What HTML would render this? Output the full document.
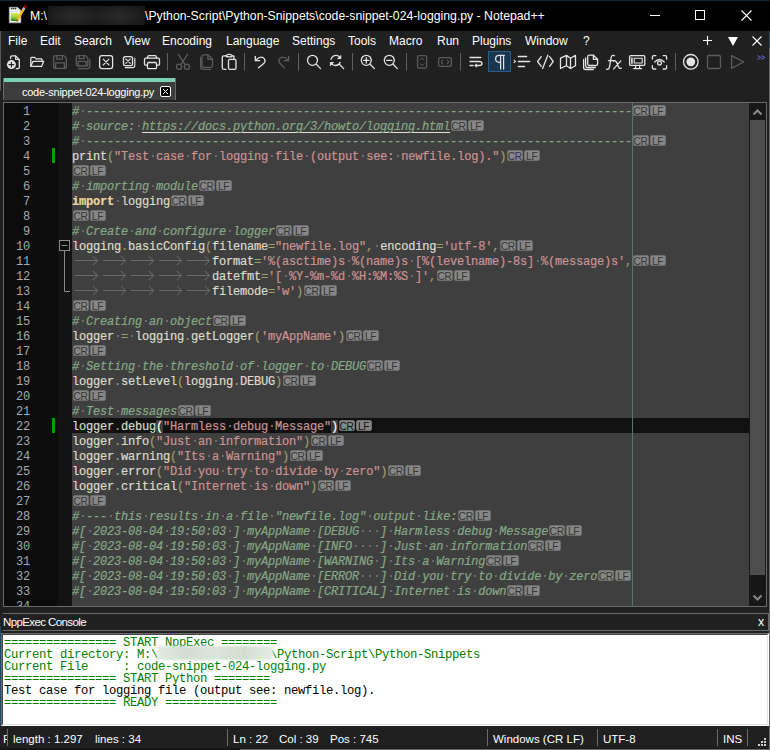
<!DOCTYPE html>
<html><head><meta charset="utf-8">
<style>
*{margin:0;padding:0;box-sizing:border-box}
html,body{width:770px;height:750px;overflow:hidden;background:#202020}
body{position:relative;font-family:"Liberation Sans",sans-serif;color:#fff}
.a{position:absolute}
#title{left:0;top:0;width:770px;height:31px;background:#000}
#title .t{left:30px;top:9px;font-size:12.25px;color:#fff;white-space:nowrap;letter-spacing:0px}
#blur{left:48px;top:6px;width:97px;height:19px;background:radial-gradient(ellipse 30px 10px at 25px 10px,#2a2a2a,transparent),radial-gradient(ellipse 28px 10px at 72px 10px,#2a2a2a,transparent),linear-gradient(90deg,#161616,#1e1e1e 20%,#1a1a1a 48%,#1e1e1e 75%,#161616)}
#menu{left:0;top:31px;width:770px;height:21px;background:#202020}
.mi{position:absolute;top:3px;font-size:12px;color:#fff;white-space:nowrap}
#tb{left:0;top:52px;width:770px;height:24px;background:#202020}
#tabbar{left:0;top:76px;width:770px;height:26px;background:#202020}
#tab{left:3px;top:2px;width:173px;height:22px;background:#3c3c3c;border-left:1px solid #6a6a6a;border-right:1px solid #6a6a6a}
#tabgreen{left:0;top:0;width:171px;height:4px;background:#7ad1b0}
#editor{left:3px;top:102px;width:764px;height:505px;border:1px solid #6a6a6a;background:#3f3f3f;overflow:hidden}
#lnm{left:0;top:0;width:54px;height:503px;background:#0c0c0c}
#fold{left:54px;top:0;width:14px;height:503px;background-color:#0e0e0e;background-image:linear-gradient(45deg,#181818 25%,transparent 25%,transparent 75%,#181818 75%),linear-gradient(45deg,#181818 25%,transparent 25%,transparent 75%,#181818 75%);background-size:2px 2px;background-position:0 0,1px 1px}
.num{position:absolute;left:0;width:26px;height:15px;text-align:right;font-family:"Liberation Mono",monospace;font-size:12px;letter-spacing:-0.2px;line-height:19px;color:#a0aab0}
#code{left:68px;top:0;width:677px;height:503px}
.ln{position:absolute;left:0;width:677px;height:15px;white-space:pre;font-family:"Liberation Mono",monospace;font-size:12px;letter-spacing:-0.2px;line-height:19px;color:#dcdccc;-webkit-text-stroke:0.2px}
.ln.cur{background:#111111}
.cm{color:#86a886;font-style:italic}
.u{text-decoration:underline;text-decoration-color:#e0e0d0;text-underline-offset:2px;text-decoration-thickness:1px}
.s{color:#cc9393}
.op{color:#9f9d6d}
.kw{color:#efd49f;font-weight:bold}
.id{color:#dcdccc}
.brace{color:#ffffff;background:#3f3f3f}
i.d{display:inline-block;width:7px;height:15px;position:relative;vertical-align:top;font-style:normal}
i.d::after{content:"";position:absolute;left:3px;top:7px;width:2px;height:2px;background:#6c6c6c}
i.t{display:inline-block;width:28px;height:15px;position:relative;vertical-align:top}
i.t::before{content:"";position:absolute;left:3px;top:7px;width:22px;height:1px;background:#6a6a6a}
i.t::after{content:"";position:absolute;left:18px;top:4.2px;width:5.6px;height:5.6px;border-top:1px solid #666;border-right:1px solid #666;transform:rotate(45deg)}
b.cr,b.lf{-webkit-text-stroke:0;display:inline-block;vertical-align:top;margin-top:2px;height:11px;width:16px;background:#878787;border:1px solid #6e6e6e;color:#353535;font-family:"Liberation Sans",sans-serif;font-weight:normal;font-size:10.2px;line-height:11.5px;text-align:center;border-radius:2px;letter-spacing:-0.3px;text-indent:-1px;white-space:nowrap;font-style:normal;text-decoration:none}
b.cr{margin-left:1px}
.cur b.cr,.cur b.lf{color:#111}
b.lf{margin-left:1px}
#edge{left:628px;top:0;width:1px;height:503px;background:#5c7272}
#vsb{left:745px;top:0;width:17px;height:503px;background:#171717}
#thumb{left:1px;top:17px;width:15px;height:455px;background:#4d4d4d}
#panelgap{left:0;top:607px;width:770px;height:6px;background:#202020}
#ptitle{left:3px;top:613px;width:766px;height:18px;background:#202020;border-top:1px solid #6a6a6a;border-bottom:1px solid #6a6a6a;border-right:1px solid #6a6a6a}
#console{left:0px;top:631px;width:770px;height:95px;background:#202020}
#cwhite{left:3px;top:4px;width:764px;height:89px;overflow:hidden}
.cl{position:absolute;left:1px;white-space:pre;font-family:"Liberation Mono",monospace;font-size:12.25px;letter-spacing:-0.35px;line-height:12px;color:#008000}
#status{left:0;top:726px;width:770px;height:24px;background:#202020}
.st{position:absolute;top:7px;font-size:11.5px;color:#fff;white-space:nowrap}
.sep{position:absolute;top:3px;width:1px;height:17px;background:#6a6a6a}
svg{position:absolute;overflow:visible}
</style></head><body>
<div id="title" class="a">
  <div class="a" style="left:0;top:0;width:770px;height:1px;background:#12283a"></div>
  <svg style="left:4px;top:2px" width="26" height="26">
    <defs><linearGradient id="gg" x1="0" y1="0" x2="0" y2="1"><stop offset="0" stop-color="#e0ea60"/><stop offset="0.5" stop-color="#9ad43a"/><stop offset="1" stop-color="#1e8a1a"/></linearGradient></defs>
    <path d="M5.3 5.3 H13.5 L16.8 8.6 V20.8 H5.3 Z" fill="#f6f6f6" stroke="#b0b0b0" stroke-width="0.8"/>
    <path d="M13.5 5.3 V8.6 H16.8 Z" fill="#d8d8d8"/>
    <circle cx="7.6" cy="6.6" r="0.9" fill="#333"/><circle cx="9.6" cy="6.6" r="0.9" fill="#333"/><circle cx="11.6" cy="6.6" r="0.9" fill="#333"/>
    <path d="M6.5 9.6 H14" stroke="#a8c8e8" stroke-width="0.6"/>
    <rect x="6.8" y="11" width="7.8" height="8" fill="url(#gg)"/>
    <path d="M20.2 6.2 L13.4 17.8" stroke="#f2b81c" stroke-width="2.6"/>
    <path d="M13.4 17.8 L12.6 19.3" stroke="#6a4a10" stroke-width="1.6"/>
    <path d="M20.4 5.8 L19.4 7.4" stroke="#a8b8d0" stroke-width="2.6"/>
    <path d="M21.6 3.8 L20.6 5.4" stroke="#c80000" stroke-width="2.6"/>
  </svg>
  <div class="a t">M:\</div>
  <div id="blur" class="a"></div>
  <div class="a t" style="left:145px">\Python-Script\Python-Snippets\code-snippet-024-logging.py - Notepad++</div>
  <svg style="left:650px;top:15px" width="11" height="1"><rect x="0" y="0" width="10" height="1" fill="#fff"/></svg>
  <svg style="left:695px;top:10px" width="11" height="11"><rect x="0.5" y="0.5" width="9" height="9" fill="none" stroke="#fff"/></svg>
  <svg style="left:741px;top:10px" width="11" height="11"><path d="M0.5 0.5L10.5 10.5M10.5 0.5L0.5 10.5" stroke="#fff" stroke-width="1.1"/></svg>
</div>
<div id="menu" class="a">
  <div class="mi" style="left:8px">File</div>
  <div class="mi" style="left:40px">Edit</div>
  <div class="mi" style="left:74px">Search</div>
  <div class="mi" style="left:124px">View</div>
  <div class="mi" style="left:162px">Encoding</div>
  <div class="mi" style="left:226px">Language</div>
  <div class="mi" style="left:292px">Settings</div>
  <div class="mi" style="left:348px">Tools</div>
  <div class="mi" style="left:389px">Macro</div>
  <div class="mi" style="left:437px">Run</div>
  <div class="mi" style="left:472px">Plugins</div>
  <div class="mi" style="left:525px">Window</div>
  <div class="mi" style="left:583px">?</div>
  <svg style="left:703px;top:5px" width="9" height="9"><path d="M4.5 0v9M0 4.5h9" stroke="#fff" stroke-width="1.2"/></svg>
  <svg style="left:728px;top:6px" width="10" height="9"><path d="M0 0h10L5 9z" fill="#fff"/></svg>
  <svg style="left:752px;top:5px" width="10" height="10"><path d="M0.5 0.5L9.5 9.5M9.5 0.5L0.5 9.5" stroke="#fff" stroke-width="1.1"/></svg>
</div>
<div id="tb" class="a"></div>
<svg style="left:0;top:0" width="770" height="76" viewBox="0 0 770 76">
<g fill="none" stroke="#e4e4e4" stroke-width="1.3" stroke-linecap="round" stroke-linejoin="round">
  <!-- new -->
  <path d="M10.6 59.3 V57.3 Q10.6 55.8 12.1 55.8 H15.4 L19.3 59.7 V67.2 Q19.3 68.6 17.9 68.6 H15.8"/>
  <path d="M15.6 56.2 V59.5 H19" stroke-width="1.1"/>
  <circle cx="11.4" cy="64.6" r="5.9" fill="#202020" stroke="none"/>
  <circle cx="11.4" cy="64.6" r="4.5" fill="#e4e4e4" stroke="none"/>
  <path d="M11.4 62.2 V67 M9 64.6 H13.8" stroke="#202020" stroke-width="1.1"/>
  <!-- open -->
  <path d="M30.8 65.8 V58.3 Q30.8 57.4 31.7 57.4 H34.7 L36.2 58.9 H41.2 Q42 58.9 42 59.7 V61"/>
  <path d="M30.8 66.3 L33 61.3 H43.7 L41.7 66.3 Z"/>
  <!-- close -->
  <rect x="99.6" y="55.6" width="13" height="13" rx="2.3"/>
  <path d="M103.2 59.2 L109 65 M109 59.2 L103.2 65" stroke-width="1.1"/>
  <!-- close all -->
  <rect x="123.5" y="56.6" width="9" height="9" rx="1.6"/>
  <path d="M125.8 58.9 L130.2 63.3 M130.2 58.9 L125.8 63.3" stroke-width="1.1"/>
  <path d="M134.8 58 V65.5 Q134.8 67.6 132.7 67.6 H125.2" stroke-width="1.1"/>
  <!-- print -->
  <path d="M147.8 58 V56.6 Q147.8 55.6 148.8 55.6 H155.2 Q156.2 55.6 156.2 56.6 V58"/>
  <path d="M147.3 65.2 H145.8 Q144.5 65.2 144.5 63.9 V59.4 Q144.5 58.1 145.8 58.1 H158.2 Q159.5 58.1 159.5 59.4 V63.9 Q159.5 65.2 158.2 65.2 H156.7"/>
  <rect x="147.5" y="62.5" width="9" height="6.2" rx="1"/>
</g>
<g fill="none" stroke="#5c5c5c" stroke-width="1.3" stroke-linecap="round" stroke-linejoin="round">
  <!-- save -->
  <path d="M55.5 55.6 H63.8 L66.4 58.2 V66.4 Q66.4 68.4 64.4 68.4 H55.6 Q53.6 68.4 53.6 66.4 V57.6 Q53.6 55.6 55.5 55.6 Z"/>
  <path d="M56.8 55.8 V59.2 H62.4 V55.8"/>
  <path d="M55.6 68.2 V62.8 H64.4 V68.2"/>
  <!-- save all -->
  <path d="M78 55.6 H85.5 L87.8 57.9 V64.3 Q87.8 66 86.1 66 H78 Q76.4 66 76.4 64.3 V57.3 Q76.4 55.6 78 55.6 Z"/>
  <path d="M79.2 55.8 V58.6 H84 V55.8"/>
  <path d="M78.2 65.8 V61.3 H86 V65.8"/>
  <path d="M89.8 59.2 V66.5 Q89.8 68.6 87.7 68.6 H78.3"/>
  <!-- cut -->
  <path d="M178.3 54.3 L184.6 63.8 M187.6 54.3 L181.3 63.8"/>
  <circle cx="179" cy="66.8" r="2.6"/>
  <circle cx="186.9" cy="66.8" r="2.6"/>
  <!-- copy -->
  <path d="M203.7 54.8 H207.9 L212.5 59.3 V65.6 Q212.5 67.3 210.8 67.3 H203.7 Q202 67.3 202 65.6 V56.5 Q202 54.8 203.7 54.8 Z"/>
  <path d="M207.9 54.9 V59.3 H212.4"/>
  <path d="M200.6 57.5 V66.8 Q200.6 69.3 203.1 69.3 H210.5"/>
  <!-- redo -->
  <path d="M288.6 56.3 V60.7 H284.2"/>
  <path d="M288.3 60.5 Q284.5 55.8 280.6 57.8 Q277.6 60.3 279.9 63.2 L284.4 67.8"/>
  <!-- sync v -->
  <rect x="417.6" y="55.6" width="9" height="12.6" rx="1.5"/>
  <path d="M420.3 59.8 L422.1 58 L423.9 59.8 M420.3 63.9 L422.1 65.7 L423.9 63.9" stroke-width="1"/>
  <!-- sync h -->
  <rect x="438.6" y="57.6" width="12.8" height="8.8" rx="1.5"/>
  <path d="M442.6 60.2 L441.2 62 L442.6 63.8 M447.4 60.2 L448.8 62 L447.4 63.8" stroke-width="1.1"/>
  <!-- stop -->
  <rect x="707.5" y="55.5" width="13" height="13" rx="1.5"/>
  <!-- play -->
  <path d="M731.6 55.6 V68.4 L743.6 62 Z"/>
</g>
<g fill="none" stroke="#e4e4e4" stroke-width="1.3" stroke-linecap="round" stroke-linejoin="round">
  <!-- paste -->
  <path d="M226 69.3 H223.8 Q222.3 69.3 222.3 67.8 V57.3 Q222.3 55.8 223.8 55.8 H226 M232.3 55.8 H233.2 Q234 55.8 234 56.6 V58.5"/>
  <path d="M226.2 56.2 Q226.2 54.3 229.2 54.3 Q232.2 54.3 232.2 56.2 Q232.2 56.8 229.2 56.8 Q226.2 56.8 226.2 56.2 Z"/>
  <rect x="228.5" y="59.3" width="7.5" height="10" rx="1.3"/>
  <!-- undo -->
  <path d="M255.3 56.3 V60.7 H259.7"/>
  <path d="M255.6 60.5 Q259.4 55.8 263.3 57.8 Q266.3 60.3 264 63.2 L258.5 67.8"/>
  <!-- find -->
  <circle cx="312.5" cy="60.3" r="5"/>
  <path d="M316.3 64.2 L320.6 68.6"/>
  <!-- replace -->
  <path d="M331 59.3 Q332.5 55.3 336.3 55.4 Q339 55.6 340.2 57.6"/>
  <path d="M340.2 62.3 Q338.8 65.7 335.3 65.5 Q332.4 65.3 331.2 63.5"/>
  <path d="M340.8 55.9 V58.6 H338.1 Z M330.4 65.2 V62.5 H333.1 Z" fill="#e4e4e4" stroke-width="1"/>
  <path d="M339.4 64.3 L343.7 68.6"/>
  <!-- zoom in -->
  <circle cx="366.3" cy="60.3" r="5"/>
  <path d="M370.1 64.2 L374.4 68.6 M366.3 57.6 V63 M363.6 60.3 H369"/>
  <!-- zoom out -->
  <circle cx="389.3" cy="60.3" r="5"/>
  <path d="M393.1 64.2 L397.4 68.6 M386.6 60.3 H392"/>
  <!-- wrap -->
  <path d="M470 57.5 H480.8 M470 61.5 H479 Q482 61.5 482 63.5 Q482 65.5 479 65.5 H475.5 M470 65.5 H473"/>
  <path d="M476.6 64.1 L475.1 65.5 L476.6 66.9" stroke-width="1.1"/>
  <!-- indent -->
  <path d="M514.1 60.2 L515.5 61.4 L514.1 62.6" stroke-width="1.1"/>
  <path d="M518.3 56.5 H526.6 M518.3 61.5 H529.8 M518.3 66.5 H524.6"/>
  <!-- lang -->
  <path d="M541.2 56.6 L537.6 61.5 L541.2 66.4 M549.6 56.6 L553.2 61.5 L549.6 66.4 M547.8 55.2 L542.6 68.4"/>
  <!-- map -->
  <path d="M560.5 58.2 L566.5 55.4 L570.5 58.2 L575.5 55.4 V65.7 L570.5 68.5 L566.5 65.7 L560.5 68.5 Z M566.5 55.4 V65.7 M570.5 58.2 V68.5"/>
  <!-- doc list -->
  <path d="M589.2 55.2 H593.4 L597.6 59.3 V64 Q597.6 65.5 596.1 65.5 H589.2 Q587.7 65.5 587.7 64 V56.7 Q587.7 55.2 589.2 55.2 Z"/>
  <path d="M593.4 55.3 V59.3 H597.5"/>
  <path d="M585.6 58 V65.8 Q585.6 67.5 587.3 67.5 H595.3 M583.6 59.5 V67.5 Q583.6 69.5 585.6 69.5 H593.3"/>
  <!-- monitor -->
  <rect x="629.6" y="55.6" width="15.2" height="9.8" rx="1.2"/>
  <rect x="634.2" y="58.2" width="8" height="4.8" stroke-width="1.1"/>
  <path d="M631.9 58 V63.2" stroke-width="1.6"/>
  <path d="M635.6 65.5 V68.4 M639.6 65.5 V68.4 M633.6 68.6 H641.6"/>
  <!-- eye -->
  <path d="M652.4 59 V56.9 Q652.4 55.6 653.7 55.6 H655.8 M663.2 55.6 H665.3 Q666.6 55.6 666.6 56.9 V59 M666.6 65.6 V67.7 Q666.6 69 665.3 69 H663.2 M655.8 69 H653.7 Q652.4 69 652.4 67.7 V65.6"/>
  <path d="M654.8 62 Q659.5 57 664.2 62"/>
  <circle cx="659.5" cy="63" r="1.9"/>
  <!-- record -->
  <circle cx="690.8" cy="61.8" r="7.3"/>
  <circle cx="690.8" cy="61.8" r="4.4" fill="#e4e4e4" stroke="none"/>
</g>
<!-- pilcrow -->
<rect x="488.5" y="51.5" width="22" height="20" fill="#1b3650" stroke="#2a5d8f" stroke-width="1"/>
<path d="M504.8 55.3 H499.2 Q495.6 55.3 495.6 58.8 Q495.6 62.3 499.2 62.3 H500.6 M500.6 55.3 V69.6 M503.6 55.3 V69.6" fill="none" stroke="#e4e4e4" stroke-width="1.2"/>
<!-- fx -->
<path d="M614.3 55.7 Q611.8 54.4 611.1 57.6 L609.5 66.8 Q608.9 70.1 606.6 69.1 M608.4 60.6 H613.3 M613.4 61.1 Q615.6 59.9 616.7 62.6 L618.3 66.6 Q619.3 69.2 621.4 68.1 M620.9 60.9 L613.6 68.9" fill="none" stroke="#e4e4e4" stroke-width="1.3" stroke-linecap="round"/>
<!-- separators -->
<g stroke="#606060" stroke-width="1">
  <path d="M167.5 53 V70.5 M244.5 53 V70.5 M298.5 53 V70.5 M352.5 53 V70.5 M406.5 53 V70.5 M460.5 53 V70.5 M675.5 53 V70.5"/>
</g>
<!-- >> -->
<path d="M757.5 55.5 L760.5 57.5 L757.5 59.5 M761.5 55.5 L764.5 57.5 L761.5 59.5" fill="none" stroke="#5a5ab8" stroke-width="1.2"/>
</svg>

<div id="tabbar" class="a">
  <div id="tab" class="a">
    <div id="tabgreen" class="a"></div>
    <div class="a" style="left:18px;top:8px;font-size:11px;letter-spacing:-0.25px;color:#fff;white-space:nowrap">code-snippet-024-logging.py</div>
    <svg style="left:156px;top:8px" width="11" height="11"><rect x="0.5" y="0.5" width="10" height="10" rx="1.5" fill="#000" stroke="#fff"/><path d="M3 3L8 8M8 3L3 8" stroke="#fff"/></svg>
  </div>
</div>
<div id="editor" class="a">
  <div id="lnm" class="a">
<div class="num" style="top:0px">1</div>
<div class="num" style="top:15px">2</div>
<div class="num" style="top:30px">3</div>
<div class="num" style="top:45px">4</div>
<div class="num" style="top:60px">5</div>
<div class="num" style="top:75px">6</div>
<div class="num" style="top:90px">7</div>
<div class="num" style="top:105px">8</div>
<div class="num" style="top:120px">9</div>
<div class="num" style="top:135px">10</div>
<div class="num" style="top:150px">11</div>
<div class="num" style="top:165px">12</div>
<div class="num" style="top:180px">13</div>
<div class="num" style="top:195px">14</div>
<div class="num" style="top:210px">15</div>
<div class="num" style="top:225px">16</div>
<div class="num" style="top:240px">17</div>
<div class="num" style="top:255px">18</div>
<div class="num" style="top:270px">19</div>
<div class="num" style="top:285px">20</div>
<div class="num" style="top:300px">21</div>
<div class="num" style="top:315px">22</div>
<div class="num" style="top:330px">23</div>
<div class="num" style="top:345px">24</div>
<div class="num" style="top:360px">25</div>
<div class="num" style="top:375px">26</div>
<div class="num" style="top:390px">27</div>
<div class="num" style="top:405px">28</div>
<div class="num" style="top:420px">29</div>
<div class="num" style="top:435px">30</div>
<div class="num" style="top:450px">31</div>
<div class="num" style="top:465px">32</div>
<div class="num" style="top:480px">33</div>
<div class="num" style="top:495px">34</div>
  </div>
  <div id="fold" class="a">
    <svg style="left:1px;top:137px" width="12" height="52"><rect x="0.5" y="0.5" width="10" height="10" fill="#0c0c0c" stroke="#8a8a8a"/><path d="M2.5 5.5h6M5.5 11v40.5H11" stroke="#8a8a8a" fill="none"/></svg>
    <div class="a" style="left:-6px;top:315px;width:3px;height:15px;background:#00a000"></div>
    <div class="a" style="left:-6px;top:45px;width:3px;height:15px;background:#00a000"></div>
  </div>
  <div id="code" class="a">
<div class="ln" style="top:0px"><span class="cm">#</span><i class="d"> </i><span class="cm">------------------------------------------------------------------------------</span><b class="cr">CR</b><b class="lf">LF</b></div>
<div class="ln" style="top:15px"><span class="cm">#</span><i class="d"> </i><span class="cm">source:</span><i class="d"> </i><span class="cm u">https://docs.python.org/3/howto/logging.html</span><b class="cr">CR</b><b class="lf">LF</b></div>
<div class="ln" style="top:30px"><span class="cm">#</span><i class="d"> </i><span class="cm">------------------------------------------------------------------------------</span><b class="cr">CR</b><b class="lf">LF</b></div>
<div class="ln" style="top:45px"><span class="id">print</span><span class="op">(</span><span class="s">&quot;Test</span><i class="d"> </i><span class="s">case</span><i class="d"> </i><span class="s">for</span><i class="d"> </i><span class="s">logging</span><i class="d"> </i><span class="s">file</span><i class="d"> </i><span class="s">(output</span><i class="d"> </i><span class="s">see:</span><i class="d"> </i><span class="s">newfile.log).&quot;</span><span class="op">)</span><b class="cr">CR</b><b class="lf">LF</b></div>
<div class="ln" style="top:60px"><b class="cr">CR</b><b class="lf">LF</b></div>
<div class="ln" style="top:75px"><span class="cm">#</span><i class="d"> </i><span class="cm">importing</span><i class="d"> </i><span class="cm">module</span><b class="cr">CR</b><b class="lf">LF</b></div>
<div class="ln" style="top:90px"><span class="kw">import</span><i class="d"> </i><span class="id">logging</span><b class="cr">CR</b><b class="lf">LF</b></div>
<div class="ln" style="top:105px"><b class="cr">CR</b><b class="lf">LF</b></div>
<div class="ln" style="top:120px"><span class="cm">#</span><i class="d"> </i><span class="cm">Create</span><i class="d"> </i><span class="cm">and</span><i class="d"> </i><span class="cm">configure</span><i class="d"> </i><span class="cm">logger</span><b class="cr">CR</b><b class="lf">LF</b></div>
<div class="ln" style="top:135px"><span class="id">logging</span><span class="op">.</span><span class="id">basicConfig</span><span class="op">(</span><span class="id">filename</span><span class="op">=</span><span class="s">&quot;newfile.log&quot;</span><span class="op">,</span><i class="d"> </i><span class="id">encoding</span><span class="op">=</span><span class="s">&#x27;utf-8&#x27;</span><span class="op">,</span><b class="cr">CR</b><b class="lf">LF</b></div>
<div class="ln" style="top:150px"><i class="t"></i><i class="t"></i><i class="t"></i><i class="t"></i><i class="t"></i><span class="id">format</span><span class="op">=</span><span class="s">&#x27;%(asctime)s</span><i class="d"> </i><span class="s">%(name)s</span><i class="d"> </i><span class="s">[%(levelname)-8s]</span><i class="d"> </i><span class="s">%(message)s&#x27;</span><span class="op">,</span><b class="cr">CR</b><b class="lf">LF</b></div>
<div class="ln" style="top:165px"><i class="t"></i><i class="t"></i><i class="t"></i><i class="t"></i><i class="t"></i><span class="id">datefmt</span><span class="op">=</span><span class="s">&#x27;[</span><i class="d"> </i><span class="s">%Y-%m-%d</span><i class="d"> </i><span class="s">%H:%M:%S</span><i class="d"> </i><span class="s">]&#x27;</span><span class="op">,</span><b class="cr">CR</b><b class="lf">LF</b></div>
<div class="ln" style="top:180px"><i class="t"></i><i class="t"></i><i class="t"></i><i class="t"></i><i class="t"></i><span class="id">filemode</span><span class="op">=</span><span class="s">&#x27;w&#x27;</span><span class="op">)</span><b class="cr">CR</b><b class="lf">LF</b></div>
<div class="ln" style="top:195px"><b class="cr">CR</b><b class="lf">LF</b></div>
<div class="ln" style="top:210px"><span class="cm">#</span><i class="d"> </i><span class="cm">Creating</span><i class="d"> </i><span class="cm">an</span><i class="d"> </i><span class="cm">object</span><b class="cr">CR</b><b class="lf">LF</b></div>
<div class="ln" style="top:225px"><span class="id">logger</span><i class="d"> </i><span class="op">=</span><i class="d"> </i><span class="id">logging</span><span class="op">.</span><span class="id">getLogger</span><span class="op">(</span><span class="s">&#x27;myAppName&#x27;</span><span class="op">)</span><b class="cr">CR</b><b class="lf">LF</b></div>
<div class="ln" style="top:240px"><b class="cr">CR</b><b class="lf">LF</b></div>
<div class="ln" style="top:255px"><span class="cm">#</span><i class="d"> </i><span class="cm">Setting</span><i class="d"> </i><span class="cm">the</span><i class="d"> </i><span class="cm">threshold</span><i class="d"> </i><span class="cm">of</span><i class="d"> </i><span class="cm">logger</span><i class="d"> </i><span class="cm">to</span><i class="d"> </i><span class="cm">DEBUG</span><b class="cr">CR</b><b class="lf">LF</b></div>
<div class="ln" style="top:270px"><span class="id">logger</span><span class="op">.</span><span class="id">setLevel</span><span class="op">(</span><span class="id">logging</span><span class="op">.</span><span class="id">DEBUG</span><span class="op">)</span><b class="cr">CR</b><b class="lf">LF</b></div>
<div class="ln" style="top:285px"><b class="cr">CR</b><b class="lf">LF</b></div>
<div class="ln" style="top:300px"><span class="cm">#</span><i class="d"> </i><span class="cm">Test</span><i class="d"> </i><span class="cm">messages</span><b class="cr">CR</b><b class="lf">LF</b></div>
<div class="ln cur" style="top:315px"><span class="id">logger</span><span class="op">.</span><span class="id">debug</span><span class="brace">(</span><span class="s">&quot;Harmless</span><i class="d"> </i><span class="s">debug</span><i class="d"> </i><span class="s">Message&quot;</span><span class="brace">)</span><b class="cr">CR</b><b class="lf">LF</b></div>
<div class="ln" style="top:330px"><span class="id">logger</span><span class="op">.</span><span class="id">info</span><span class="op">(</span><span class="s">&quot;Just</span><i class="d"> </i><span class="s">an</span><i class="d"> </i><span class="s">information&quot;</span><span class="op">)</span><b class="cr">CR</b><b class="lf">LF</b></div>
<div class="ln" style="top:345px"><span class="id">logger</span><span class="op">.</span><span class="id">warning</span><span class="op">(</span><span class="s">&quot;Its</span><i class="d"> </i><span class="s">a</span><i class="d"> </i><span class="s">Warning&quot;</span><span class="op">)</span><b class="cr">CR</b><b class="lf">LF</b></div>
<div class="ln" style="top:360px"><span class="id">logger</span><span class="op">.</span><span class="id">error</span><span class="op">(</span><span class="s">&quot;Did</span><i class="d"> </i><span class="s">you</span><i class="d"> </i><span class="s">try</span><i class="d"> </i><span class="s">to</span><i class="d"> </i><span class="s">divide</span><i class="d"> </i><span class="s">by</span><i class="d"> </i><span class="s">zero&quot;</span><span class="op">)</span><b class="cr">CR</b><b class="lf">LF</b></div>
<div class="ln" style="top:375px"><span class="id">logger</span><span class="op">.</span><span class="id">critical</span><span class="op">(</span><span class="s">&quot;Internet</span><i class="d"> </i><span class="s">is</span><i class="d"> </i><span class="s">down&quot;</span><span class="op">)</span><b class="cr">CR</b><b class="lf">LF</b></div>
<div class="ln" style="top:390px"><b class="cr">CR</b><b class="lf">LF</b></div>
<div class="ln" style="top:405px"><span class="cm">#</span><i class="d"> </i><span class="cm">---</span><i class="d"> </i><span class="cm">this</span><i class="d"> </i><span class="cm">results</span><i class="d"> </i><span class="cm">in</span><i class="d"> </i><span class="cm">a</span><i class="d"> </i><span class="cm">file</span><i class="d"> </i><span class="cm">&quot;newfile.log&quot;</span><i class="d"> </i><span class="cm">output</span><i class="d"> </i><span class="cm">like:</span><b class="cr">CR</b><b class="lf">LF</b></div>
<div class="ln" style="top:420px"><span class="cm">#[</span><i class="d"> </i><span class="cm">2023-08-04</span><i class="d"> </i><span class="cm">19:50:03</span><i class="d"> </i><span class="cm">]</span><i class="d"> </i><span class="cm">myAppName</span><i class="d"> </i><span class="cm">[DEBUG</span><i class="d"> </i><i class="d"> </i><i class="d"> </i><span class="cm">]</span><i class="d"> </i><span class="cm">Harmless</span><i class="d"> </i><span class="cm">debug</span><i class="d"> </i><span class="cm">Message</span><b class="cr">CR</b><b class="lf">LF</b></div>
<div class="ln" style="top:435px"><span class="cm">#[</span><i class="d"> </i><span class="cm">2023-08-04</span><i class="d"> </i><span class="cm">19:50:03</span><i class="d"> </i><span class="cm">]</span><i class="d"> </i><span class="cm">myAppName</span><i class="d"> </i><span class="cm">[INFO</span><i class="d"> </i><i class="d"> </i><i class="d"> </i><i class="d"> </i><span class="cm">]</span><i class="d"> </i><span class="cm">Just</span><i class="d"> </i><span class="cm">an</span><i class="d"> </i><span class="cm">information</span><b class="cr">CR</b><b class="lf">LF</b></div>
<div class="ln" style="top:450px"><span class="cm">#[</span><i class="d"> </i><span class="cm">2023-08-04</span><i class="d"> </i><span class="cm">19:50:03</span><i class="d"> </i><span class="cm">]</span><i class="d"> </i><span class="cm">myAppName</span><i class="d"> </i><span class="cm">[WARNING</span><i class="d"> </i><span class="cm">]</span><i class="d"> </i><span class="cm">Its</span><i class="d"> </i><span class="cm">a</span><i class="d"> </i><span class="cm">Warning</span><b class="cr">CR</b><b class="lf">LF</b></div>
<div class="ln" style="top:465px"><span class="cm">#[</span><i class="d"> </i><span class="cm">2023-08-04</span><i class="d"> </i><span class="cm">19:50:03</span><i class="d"> </i><span class="cm">]</span><i class="d"> </i><span class="cm">myAppName</span><i class="d"> </i><span class="cm">[ERROR</span><i class="d"> </i><i class="d"> </i><i class="d"> </i><span class="cm">]</span><i class="d"> </i><span class="cm">Did</span><i class="d"> </i><span class="cm">you</span><i class="d"> </i><span class="cm">try</span><i class="d"> </i><span class="cm">to</span><i class="d"> </i><span class="cm">divide</span><i class="d"> </i><span class="cm">by</span><i class="d"> </i><span class="cm">zero</span><b class="cr">CR</b><b class="lf">LF</b></div>
<div class="ln" style="top:480px"><span class="cm">#[</span><i class="d"> </i><span class="cm">2023-08-04</span><i class="d"> </i><span class="cm">19:50:03</span><i class="d"> </i><span class="cm">]</span><i class="d"> </i><span class="cm">myAppName</span><i class="d"> </i><span class="cm">[CRITICAL]</span><i class="d"> </i><span class="cm">Internet</span><i class="d"> </i><span class="cm">is</span><i class="d"> </i><span class="cm">down</span><b class="cr">CR</b><b class="lf">LF</b></div>
<div class="ln" style="top:495px"></div>
  </div>
  <div id="edge" class="a"></div>
  <div id="vsb" class="a"><div id="thumb" class="a"></div>
    <svg style="left:4px;top:6px" width="9" height="6"><path d="M0.5 5.5L4.5 1.5L8.5 5.5" stroke="#8a8a8a" stroke-width="2" fill="none"/></svg>
    <svg style="left:4px;top:492px" width="9" height="6"><path d="M0.5 0.5L4.5 4.5L8.5 0.5" stroke="#8a8a8a" stroke-width="2" fill="none"/></svg>
  </div>
</div>
<div id="ptitle" class="a">
  <div class="a" style="left:0px;top:2px;font-size:11.5px;color:#fff;letter-spacing:-0.6px">NppExec Console</div>
  <div class="a" style="left:755px;top:1px;font-size:12.5px;color:#fff">x</div>
</div>
<div id="console" class="a">
  <div class="a" style="left:1px;top:2px;width:768px;height:93px;border-top:1px solid #6a6a6a;border-left:1px solid #6a6a6a;border-right:1px solid #ffffff;border-bottom:1px solid #ffffff"></div>
  <div class="a" style="left:2px;top:3px;width:766px;height:91px;border-top:1px solid #444;border-left:1px solid #444;border-right:1px solid #e3e3e3;border-bottom:1px solid #e3e3e3;background:#fff"></div>
  <div id="cwhite" class="a">
<div class="cl" style="top:2px">================ START NppExec ========</div>
<div class="cl" style="top:14px">Current directory: M:\                \Python-Script\Python-Snippets</div>
<div class="cl" style="top:26px">Current File     : code-snippet-024-logging.py</div>
<div class="cl" style="top:38px">================ START Python ========</div>
<div class="cl" style="top:50px;color:#000">Test case for logging file (output see: newfile.log).</div>
<div class="cl" style="top:62px">================ READY ================</div>
<div class="a" style="left:154px;top:11px;width:116px;height:14px;background:linear-gradient(90deg,#e2ebe2,#d0dfd0 25%,#dae6da 50%,#cfdecf 75%,#e6eee6);filter:blur(1px)"></div>
  </div>
</div>
<div id="status" class="a">
  <div class="a" style="left:3px;top:0;width:4px;height:24px;overflow:hidden"><div class="st" style="left:0">P</div></div>
  <div class="sep" style="left:7px"></div>
  <div class="st" style="left:13px">length : 1.297</div>
  <div class="st" style="left:95px">lines : 34</div>
  <div class="sep" style="left:227px"></div>
  <div class="st" style="left:233px">Ln : 22</div>
  <div class="st" style="left:279px">Col : 39</div>
  <div class="st" style="left:330px">Pos : 745</div>
  <div class="sep" style="left:487px"></div>
  <div class="st" style="left:493px">Windows (CR LF)</div>
  <div class="sep" style="left:597px"></div>
  <div class="st" style="left:603px">UTF-8</div>
  <div class="sep" style="left:717px"></div>
  <div class="st" style="left:723px">INS</div>
  <div class="sep" style="left:747px"></div>
  <svg style="left:758px;top:12px" width="9" height="9"><path d="M6 0h2v2h-2zM3 3h2v2h-2zM6 3h2v2h-2zM0 6h2v2h-2zM3 6h2v2h-2zM6 6h2v2h-2z" fill="#d0d0d0"/></svg>
</div>
<div class="a" style="left:769px;top:31px;width:1px;height:17px;background:#1e4a70"></div>
<div class="a" style="left:769px;top:48px;width:1px;height:702px;background:#6a6a6a"></div>
<div class="a" style="left:0px;top:31px;width:1px;height:60px;background:#5a5a5a"></div>
<div class="a" style="left:0px;top:626px;width:1px;height:100px;background:#1e4a70"></div>
<div class="a" style="left:0;top:748px;width:769px;height:1px;background:#181818"></div>
<div class="a" style="left:0;top:749px;width:240px;height:1px;background:#121212"></div>
<div class="a" style="left:240px;top:749px;width:530px;height:1px;background:#6a6a6a"></div>
</body></html>
